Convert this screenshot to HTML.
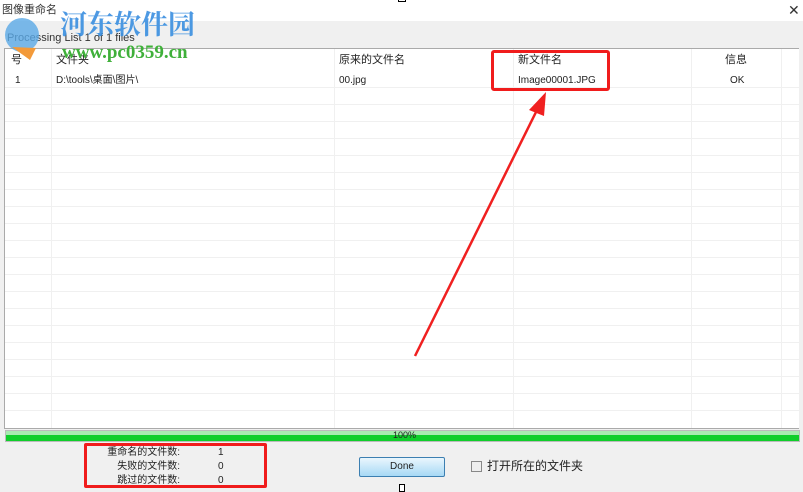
<!DOCTYPE html>
<html><head><meta charset="utf-8"><style>
*{margin:0;padding:0;box-sizing:border-box}
body{width:803px;height:490px;overflow:hidden;background:#f0f0f0;font-family:"Liberation Sans","Noto Sans CJK SC",sans-serif;font-size:11px;color:#222;position:relative}
.a{position:absolute;line-height:13px;white-space:nowrap}
.title{left:0;top:0;width:803px;height:21px;background:#fff}
.tbl{left:4px;top:48px;width:795px;height:381px;background:#fff;border:1px solid #aaa;border-right:none;overflow:hidden}
.vl{position:absolute;top:0;bottom:0;width:1px;background:#f0f0f0}
.hl{position:absolute;left:0;right:0;height:1px;background:#f0f0f0}
</style></head><body>
<div class="a title"></div>
<div class="a" style="left:2px;top:4px;font-size:11px;color:#333">图像重命名</div>
<div class="a" style="left:788px;top:4px;font-size:14px;color:#333">✕</div>
<div class="a" style="left:398px;top:-4px;width:8px;height:6px;border:1px solid #000;background:#fff"></div>
<div class="a" style="left:7px;top:32px;font-size:11px;color:#333">Processing List 1 of 1 files</div>
<div class="a tbl">
<div class="vl" style="left:46px"></div><div class="vl" style="left:329px"></div><div class="vl" style="left:508px"></div><div class="vl" style="left:686px"></div><div class="vl" style="left:776px"></div>
<div class="hl" style="top:38px"></div><div class="hl" style="top:55px"></div><div class="hl" style="top:72px"></div><div class="hl" style="top:89px"></div><div class="hl" style="top:106px"></div><div class="hl" style="top:123px"></div><div class="hl" style="top:140px"></div><div class="hl" style="top:157px"></div><div class="hl" style="top:174px"></div><div class="hl" style="top:191px"></div><div class="hl" style="top:208px"></div><div class="hl" style="top:225px"></div><div class="hl" style="top:242px"></div><div class="hl" style="top:259px"></div><div class="hl" style="top:276px"></div><div class="hl" style="top:293px"></div><div class="hl" style="top:310px"></div><div class="hl" style="top:327px"></div><div class="hl" style="top:344px"></div><div class="hl" style="top:361px"></div>
<div class="a" style="left:6px;top:5px">号</div><div class="a" style="left:51px;top:5px">文件夹</div><div class="a" style="left:334px;top:5px">原来的文件名</div><div class="a" style="left:513px;top:5px">新文件名</div><div class="a" style="left:720px;top:5px">信息</div>
<div class="a" style="left:10px;top:25px;font-size:10px">1</div><div class="a" style="left:51px;top:25px;font-size:10px">D:\tools\桌面\图片\</div><div class="a" style="left:334px;top:25px;font-size:10px">00.jpg</div><div class="a" style="left:513px;top:25px;font-size:10px">Image00001.JPG</div><div class="a" style="left:725px;top:25px;font-size:10px">OK</div>
</div>
<div class="a" style="left:5px;top:430px;width:795px;height:12px;background:linear-gradient(#a8eab0 0 40%,#0fce2a 40%);border:1px solid #bbb"></div>
<div class="a" style="left:393px;top:430px;font-size:9px;line-height:11px">100%</div>
<div class="a" style="left:84px;top:443px;width:183px;height:45px;border:3px solid #f01c1c;border-radius:2px"></div>
<div class="a" style="left:100px;top:446px;font-size:10px;line-height:14px;text-align:right;width:80px">重命名的文件数:<br>失败的文件数:<br>跳过的文件数:</div>
<div class="a" style="left:218px;top:446px;font-size:10px;line-height:14px">1<br>0<br>0</div>
<div class="a" style="left:359px;top:457px;width:86px;height:20px;border:1px solid #3c7fb1;border-radius:2px;background:linear-gradient(#eaf6fd,#a7d9f5);text-align:center;line-height:18px;font-size:10px">Done</div>
<div class="a" style="left:471px;top:461px;width:11px;height:11px;border:1px solid #888;background:#eee"></div>
<div class="a" style="left:487px;top:460px;font-size:12px">打开所在的文件夹</div>
<div class="a" style="left:399px;top:484px;width:6px;height:8px;border:1px solid #000;background:#fff"></div>
<div class="a" style="left:491px;top:50px;width:119px;height:41px;border:3px solid #f01c1c;border-radius:3px"></div>
<svg class="a" style="left:0;top:0" width="803" height="490"><line x1="415" y1="356" x2="538" y2="108" stroke="#f02020" stroke-width="2.5"/><polygon points="546,92 529,110 544,116" fill="#f02020"/>
<circle cx="22" cy="35" r="17" fill="#5aa9e6" opacity=".8"/><path d="M12 47 L30 60 L36 48 Z" fill="#f39a3a"/></svg>
<div class="a" style="left:60px;top:8px;font-size:27px;line-height:30px;font-weight:bold;color:#3a8fe0;font-family:'Noto Serif CJK SC',serif;opacity:.9">河东软件园</div>
<div class="a" style="left:62px;top:43px;font-size:19px;line-height:20px;font-weight:bold;color:#3fb03a;font-family:'Liberation Serif',serif">www.pc0359.cn</div>
</body></html>
